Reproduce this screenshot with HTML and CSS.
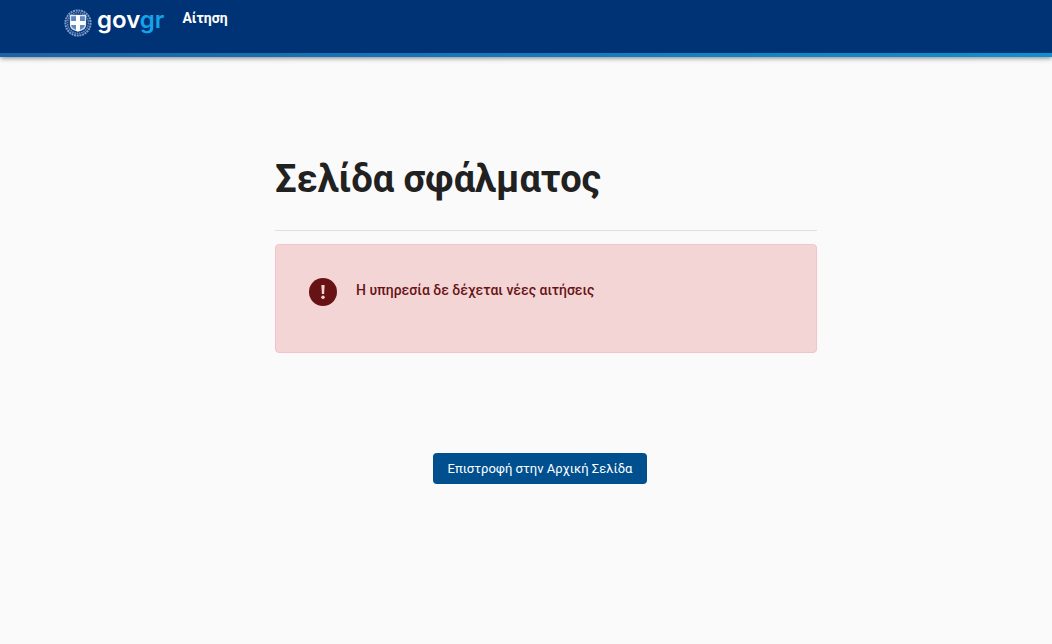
FILE: index.html
```
<!DOCTYPE html>
<html lang="el">
<head>
  <meta charset="UTF-8">
  <meta name="viewport" content="width=device-width, initial-scale=1.0">
  <title>Σελίδα σφάλματος</title>
  <link rel="stylesheet" href="styles.css">
</head>
<body>

<header class="header">
  <a class="logo" href="#">
    <svg class="emblem" viewBox="0 0 28 28" aria-hidden="true">
      <circle cx="14" cy="14" r="12.6" fill="none" stroke="#7f9bc8" stroke-width="2" stroke-dasharray="2 .7"/>
      <circle cx="14" cy="14" r="10.4" fill="none" stroke="#6988bc" stroke-width="1.6" stroke-dasharray="1.5 .8"/>
      <path d="M6.500 6.500h15v9.500c0 3-2.500 5-7.500 6-5-1-7.500-3-7.500-6z" fill="#5f86bd" stroke="#d9e7f7" stroke-width="1.300"/>
      <path d="M14 6v16M6.500 14h15" stroke="#fff" stroke-width="4"/>
    </svg>
    <span class="wordmark">gov<span class="wordmark-gr">gr</span></span>
  </a>
  <span class="service">Αίτηση</span>
</header>

<main class="main">
  <section class="content">
    <h1>Σελίδα σφάλματος</h1>
    <div class="alert" role="alert">
      <svg class="alert-icon" viewBox="0 0 28 28" aria-hidden="true">
        <circle cx="14" cy="14" r="14" fill="#671315"/>
        <path d="M12.400 7h3.200l-.5 9h-2.200z" fill="#f4d5d6"/>
        <circle cx="14" cy="19.300" r="1.700" fill="#f4d5d6"/>
      </svg>
      <p>Η υπηρεσία δε δέχεται νέες αιτήσεις</p>
    </div>
  </section>
  <button class="btn" type="button">Επιστροφή στην Αρχική Σελίδα</button>
</main>

</body>
</html>
```
FILE: styles.css
```
* {
  box-sizing: border-box;
}
body {
  font-family: Roboto, "Noto Sans", sans-serif;
  margin: 0;
  background-color: #fafafa;
  color: #212121;
}
.header {
  display: flex;
  gap: 18px;
  height: 57px;
  padding: 8px 64px 0;
  background: linear-gradient(to right, #1a64a6, #128fcd) bottom / 100% 4px no-repeat #003375;
  box-shadow: 0 1px 5px rgba(0, 0, 0, 0.5);
}
.logo {
  display: flex;
  gap: 5px;
  color: #fff;
  text-decoration: none;
}
.emblem {
  width: 28px;
  height: 28px;
  margin-top: 1px;
}
.wordmark {
  font-family: Inter, sans-serif;
  font-size: 24px;
  font-weight: 600;
  line-height: 24px;
}
.wordmark-gr {
  color: #14a3ea;
}
.service {
  color: #fff;
  font-size: 14px;
  font-weight: 700;
  line-height: 20px;
}
.main {
  display: flex;
  flex-direction: column;
  align-items: center;
  padding: 96px 16px 0 44px;
}
.content {
  width: 100%;
  max-width: 554px;
  padding-left: 12px;
}
h1 {
  margin: 0 0 13px;
  padding-bottom: 25px;
  border-bottom: 1px solid #e0e0e0;
  font-size: 38px;
  font-weight: 700;
  line-height: 52px;
}
.alert {
  display: flex;
  gap: 19px;
  min-height: 109px;
  padding: 33px;
  background-color: #f4d5d6;
  border: 1px solid #f0c4c8;
  border-radius: 4px;
  color: #671315;
}
.alert-icon {
  flex: none;
  width: 28px;
  height: 28px;
}
.alert p {
  margin: 0;
  font-size: 14px;
  font-weight: 500;
  line-height: 24px;
}
.btn {
  margin-top: 100px;
  padding: 0 15px;
  border: none;
  border-radius: 4px;
  background-color: #00508f;
  color: #fff;
  font-family: inherit;
  font-size: 13px;
  line-height: 31px;
  cursor: pointer;
}
```
